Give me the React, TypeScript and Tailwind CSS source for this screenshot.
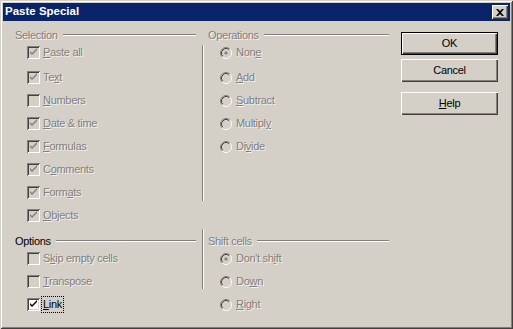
import React from 'react';

const face = '#d4d0c8';

const CheckBox: React.FC<{ checked?: boolean; disabled?: boolean }> = ({ checked, disabled }) => (
    <span
        className={`relative inline-block w-[13px] h-[13px] shrink-0 shadow-[inset_1px_1px_#808080,inset_-1px_-1px_#ffffff,inset_2px_2px_#404040,inset_-2px_-2px_#d4d0c8] ${disabled ? 'bg-[#d4d0c8]' : 'bg-white'}`}
    >
        {checked && (
            <svg className="absolute left-0 top-0" width="13" height="13" viewBox="0 0 13 13">
                <path d="M3 5 L3 7 L5 9 L10 4 L10 2 L5 7 Z" fill={disabled ? '#808080' : '#000000'} />
            </svg>
        )}
    </span>
);

const Radio: React.FC<{ checked?: boolean }> = ({ checked }) => (
    <svg width="12" height="12" viewBox="0 0 12 12" className="shrink-0">
        <circle cx="6" cy="6" r="4.5" fill={face} />
        <path d="M2.11 9.89 A5.5 5.5 0 0 1 9.89 2.11" fill="none" stroke="#808080" strokeWidth="1" />
        <path d="M9.89 2.11 A5.5 5.5 0 0 1 2.11 9.89" fill="none" stroke="#ffffff" strokeWidth="1" />
        <path d="M2.82 9.18 A4.5 4.5 0 0 1 9.18 2.82" fill="none" stroke="#404040" strokeWidth="1" />
        <path d="M9.18 2.82 A4.5 4.5 0 0 1 2.82 9.18" fill="none" stroke={face} strokeWidth="1" />
        {checked && <circle cx="6" cy="6" r="1.6" fill="#808080" />}
    </svg>
);

// label text with one underlined accelerator letter
const Label: React.FC<{ text: string; at: number; disabled?: boolean }> = ({ text, at, disabled }) => (
    <span className={disabled ? 'text-[#808080] [text-shadow:1px_1px_0_#f4f2ee]' : 'text-black'}>
        {text.slice(0, at)}
        <u className="underline underline-offset-1">{text.charAt(at)}</u>
        {text.slice(at + 1)}
    </span>
);

const GroupHeader: React.FC<{ title: string; disabled?: boolean; className?: string }> = ({ title, disabled, className }) => (
    <div className={`flex items-center h-[12px] ${className ?? ''}`}>
        <span className={disabled ? 'text-[#808080] [text-shadow:1px_1px_0_#f4f2ee]' : 'text-black'}>{title}</span>
        <div className="flex-1 ml-[5px] h-[2px] border-t border-t-[#808080] border-b border-b-white" />
    </div>
);

const VLine: React.FC<{ className: string }> = ({ className }) => (
    <div className={`w-[2px] shrink-0 border-l border-l-[#808080] border-r border-r-white ${className}`} />
);

const checks: { text: string; at: number; checked: boolean }[] = [
    { text: 'Paste all', at: 0, checked: true },
    { text: 'Text', at: 2, checked: true },
    { text: 'Numbers', at: 0, checked: false },
    { text: 'Date & time', at: 0, checked: true },
    { text: 'Formulas', at: 0, checked: true },
    { text: 'Comments', at: 1, checked: true },
    { text: 'Formats', at: 4, checked: true },
    { text: 'Objects', at: 0, checked: true },
];

const operations: { text: string; at: number }[] = [
    { text: 'None', at: 3 },
    { text: 'Add', at: 0 },
    { text: 'Subtract', at: 0 },
    { text: 'Multiply', at: 7 },
    { text: 'Divide', at: 2 },
];

const shifts: { text: string; at: number }[] = [
    { text: "Don't shift", at: 8 },
    { text: 'Down', at: 2 },
    { text: 'Right', at: 0 },
];

const Button: React.FC<{ children: React.ReactNode; isDefault?: boolean; className?: string }> = ({ children, isDefault, className }) => (
    <div
        className={`h-[23px] w-[97px] flex items-center justify-center text-black ${
            isDefault
                ? 'shadow-[inset_1px_1px_#000,inset_-1px_-1px_#000,inset_2px_2px_#fff,inset_-2px_-2px_#404040,inset_-3px_-3px_#808080]'
                : 'shadow-[inset_1px_1px_#fff,inset_-1px_-1px_#404040,inset_-2px_-2px_#808080]'
        } ${className ?? ''}`}
    >
        {children}
    </div>
);

export default function App() {
    return (
        <div
            className="w-[513px] h-[329px] bg-[#d4d0c8] p-[3px] flex flex-col text-[11px] tracking-[-0.3px] leading-none shadow-[inset_1px_1px_#d4d0c8,inset_-1px_-1px_#404040,inset_2px_2px_#ffffff,inset_-2px_-2px_#808080]"
            style={{ fontFamily: '"Liberation Sans", Arial, sans-serif' }}
        >
            {/* title bar */}
            <div className="h-[18px] bg-[#0a246a] flex items-center pl-[2px] pr-[2px]">
                <span className="flex-1 text-white font-bold text-[11.5px] tracking-normal">Paste Special</span>
                <div className="w-[16px] h-[14px] bg-[#d4d0c8] flex items-center justify-center shadow-[inset_1px_1px_#fff,inset_-1px_-1px_#404040,inset_-2px_-2px_#808080]">
                    <svg width="8" height="7" viewBox="0 0 8 7">
                        <path d="M0 0 H2 L4 2 L6 0 H8 L5 3.5 L8 7 H6 L4 5 L2 7 H0 L3 3.5 Z" fill="#000" />
                    </svg>
                </div>
            </div>

            {/* body */}
            <div className="flex pl-[12px] pt-[8px]">
                {/* left column */}
                <div className="w-[181px] flex flex-col">
                    <GroupHeader title="Selection" disabled />
                    {checks.map((c, i) => (
                        <div key={c.text} className={`h-[23px] flex items-center gap-[3px] pl-[12px] ${i === 1 ? 'mt-[2px]' : ''}`}>
                            <CheckBox checked={c.checked} disabled />
                            <Label text={c.text} at={c.at} disabled />
                        </div>
                    ))}
                    <GroupHeader title="Options" className="mt-[8px]" />
                    <div className="h-[23px] flex items-center gap-[3px] pl-[12px]">
                        <CheckBox disabled />
                        <Label text="Skip empty cells" at={1} disabled />
                    </div>
                    <div className="h-[23px] flex items-center gap-[3px] pl-[12px]">
                        <CheckBox disabled />
                        <Label text="Transpose" at={0} disabled />
                    </div>
                    <div className="h-[23px] flex items-center gap-[2px] pl-[12px]">
                        <CheckBox checked />
                        <span className="outline-1 outline-dotted outline-black px-[1px] py-[2px]">
                            <Label text="Link" at={0} />
                        </span>
                    </div>
                </div>

                {/* middle column */}
                <div className="w-[187px] ml-[6px] flex flex-col">
                    <GroupHeader title="Operations" disabled className="pl-[6px]" />
                    <div className="flex">
                        <VLine className="mt-[4px] h-[156px]" />
                        <div className="flex flex-col pl-[16px]">
                            {operations.map((o, i) => (
                                <div key={o.text} className={`h-[23px] flex items-center gap-[4px] ${i === 1 ? 'mt-[2px]' : ''}`}>
                                    <Radio checked={i === 0} />
                                    <Label text={o.text} at={o.at} disabled />
                                </div>
                            ))}
                        </div>
                    </div>
                    <div className="flex mt-[28px]">
                        <VLine className="h-[60px]" />
                        <div className="flex-1 flex flex-col mt-[6px]">
                            <GroupHeader title="Shift cells" disabled className="pl-[4px]" />
                            {shifts.map((s, i) => (
                                <div key={s.text} className="h-[23px] flex items-center gap-[4px] pl-[16px]">
                                    <Radio checked={i === 0} />
                                    <Label text={s.text} at={s.at} disabled />
                                </div>
                            ))}
                        </div>
                    </div>
                </div>

                {/* buttons */}
                <div className="ml-[12px] flex flex-col pt-[3px]">
                    <Button isDefault>OK</Button>
                    <Button className="mt-[4px]">Cancel</Button>
                    <Button className="mt-[10px]">
                        <Label text="Help" at={0} />
                    </Button>
                </div>
            </div>
        </div>
    );
}
